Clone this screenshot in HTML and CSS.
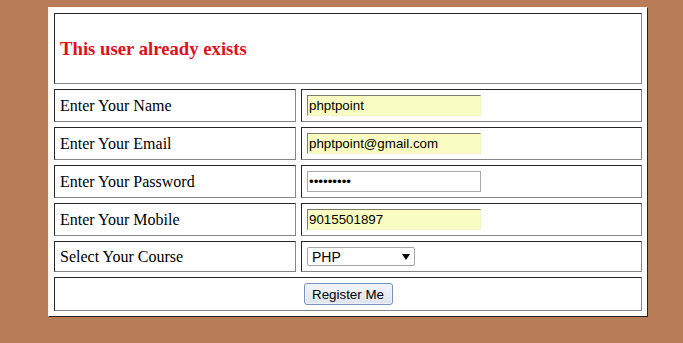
FILE: index.html
```html
<!DOCTYPE html>
<html>
<head>
<meta charset="utf-8">
<title>Register</title>
<link rel="stylesheet" href="styles.css">
</head>
<body>
<form class="reg-form">
<table class="reg-table">
  <tr>
    <td colspan="2" class="msg-cell"><h3 class="msg">This user already exists</h3></td>
  </tr>
  <tr>
    <td class="label">Enter Your Name</td>
    <td class="field"><input class="txt filled" type="text" value="phptpoint"></td>
  </tr>
  <tr>
    <td class="label">Enter Your Email</td>
    <td class="field"><input class="txt filled" type="text" value="phptpoint@gmail.com"></td>
  </tr>
  <tr>
    <td class="label">Enter Your Password</td>
    <td class="field"><input class="txt" type="password" value="phptpoint"></td>
  </tr>
  <tr>
    <td class="label">Enter Your Mobile</td>
    <td class="field"><input class="txt filled" type="text" value="9015501897"></td>
  </tr>
  <tr>
    <td class="label">Select Your Course</td>
    <td class="field">
      <select class="course">
        <option>PHP</option>
        <option>Java</option>
        <option>Python</option>
      </select>
    </td>
  </tr>
  <tr>
    <td colspan="2" class="btn-cell"><button type="button" class="btn">Register Me</button></td>
  </tr>
</table>
</form>
</body>
</html>
```
FILE: styles.css
```css
html, body {
  margin: 0;
  padding: 0;
}
body {
  background: #b97c59;
  padding-top: 7px;
  font-family: "Liberation Serif", "Times New Roman", serif;
  font-size: 16px;
  color: #000;
}
.reg-form {
  margin: 0 0 0 48px;
}
.reg-table {
  width: 600px;
  box-sizing: border-box;
  border-collapse: separate;
  border-spacing: 5px;
  background: #fff;
  border-style: solid;
  border-width: 1px;
  border-color: #fbf6e6 #222 #222 #fbf6e6;
}
.reg-table td {
  box-sizing: border-box;
  padding: 5px;
  border-style: solid;
  border-width: 1px;
  border-color: #262626 #858585 #858585 #262626;
  vertical-align: middle;
}
.reg-table td.label {
  width: 242px;
  line-height: 19px;
}
.msg {
  margin: 19px 0;
  font-size: 18.72px;
  line-height: 21px;
  font-weight: bold;
  color: #df1020;
}
.txt {
  display: block;
  box-sizing: border-box;
  width: 174px;
  height: 21px;
  margin: 0;
  padding: 0 1px;
  font-family: "Liberation Sans", Arial, sans-serif;
  font-size: 13.33px;
  color: #000;
  background: #fff;
  border: 1px solid #a9a9a9;
  outline: none;
}
.txt.filled {
  background: #fafdc2;
  border-color: #7b7b6a #f3f6c8 #f3f6c8 #7b7b6a;
}
.course {
  display: block;
  box-sizing: border-box;
  width: 108px;
  height: 19px;
  margin: 0;
  padding: 0 0 0 4px;
  font-family: "Liberation Sans", Arial, sans-serif;
  font-size: 14px;
  color: #000;
  border: 1px solid #a6a6a6;
  border-radius: 2px;
  -webkit-appearance: none;
  appearance: none;
  background: #fff url("data:image/svg+xml;utf8,<svg xmlns='http://www.w3.org/2000/svg' width='8' height='6'><path d='M0 0H8L4 6Z' fill='black'/></svg>") no-repeat 94px 6px;
}
.btn-cell {
  text-align: center;
}
.btn {
  display: block;
  box-sizing: border-box;
  width: 89px;
  height: 22px;
  margin: 0 auto;
  padding: 0;
  font-family: "Liberation Sans", Arial, sans-serif;
  font-size: 13.33px;
  color: #000;
  border: 1px solid #7893bf;
  border-radius: 3px;
  background: linear-gradient(#f3f5f8, #dde4ee);
  box-shadow: inset 0 0 0 1px #eef3fa;
}
```
